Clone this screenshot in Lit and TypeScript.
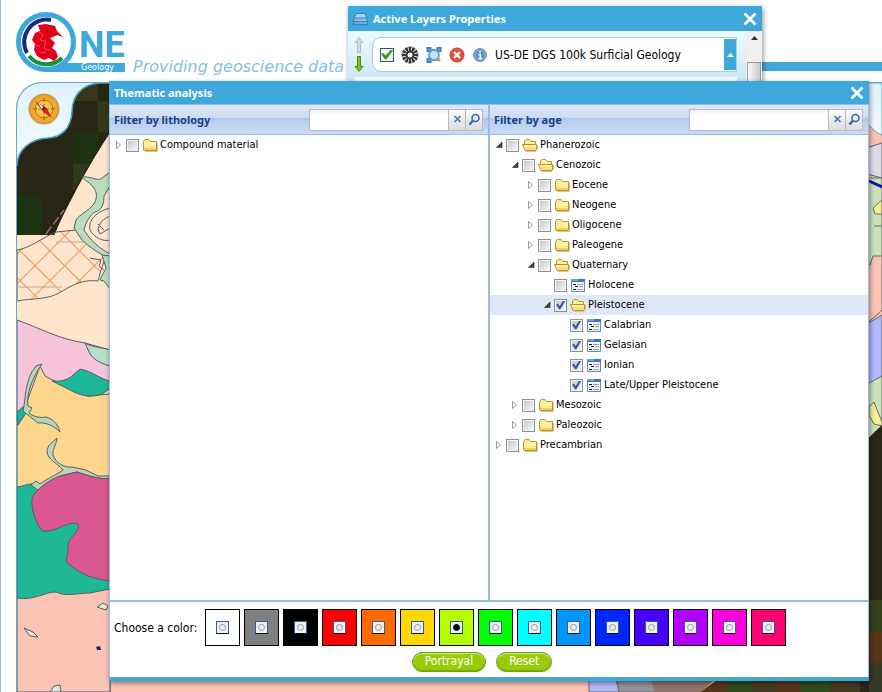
import { LitElement, html, svg, css, nothing } from "lit";
import { customElement, property, state } from "lit/decorators.js";
import { classMap } from "lit/directives/class-map.js";
import { styleMap } from "lit/directives/style-map.js";

interface TreeNode {
  label: string;
  open?: boolean;
  checked?: boolean;
  selected?: boolean;
  leaf?: boolean;
  children?: TreeNode[];
}

const LITHOLOGY: TreeNode[] = [{ label: "Compound material" }];

const AGES: TreeNode[] = [
  {
    label: "Phanerozoic",
    open: true,
    children: [
      {
        label: "Cenozoic",
        open: true,
        children: [
          { label: "Eocene" },
          { label: "Neogene" },
          { label: "Oligocene" },
          { label: "Paleogene" },
          {
            label: "Quaternary",
            open: true,
            children: [
              { label: "Holocene", leaf: true },
              {
                label: "Pleistocene",
                open: true,
                checked: true,
                selected: true,
                children: [
                  { label: "Calabrian", leaf: true, checked: true },
                  { label: "Gelasian", leaf: true, checked: true },
                  { label: "Ionian", leaf: true, checked: true },
                  { label: "Late/Upper Pleistocene", leaf: true, checked: true },
                ],
              },
            ],
          },
        ],
      },
      { label: "Mesozoic" },
      { label: "Paleozoic" },
    ],
  },
  { label: "Precambrian" },
];

const COLORS: [string, string][] = [
  ["White", "#ffffff"], ["Grey", "#808080"], ["Black", "#000000"], ["Red", "#ff0000"],
  ["Orange", "#ff6a00"], ["Gold", "#ffd800"], ["Lime", "#b6ff00"], ["Green", "#00ff00"],
  ["Cyan", "#00ffff"], ["Azure", "#0094ff"], ["Blue", "#0026ff"], ["Indigo", "#4800ff"],
  ["Violet", "#b200ff"], ["Magenta", "#ff00dc"], ["Pink", "#ff006e"],
];

const closeIcon = html`<svg width="14" height="14" viewBox="0 0 14 14" aria-hidden="true">
  <path d="M1.500 1.500 12.500 12.500M12.500 1.500 1.500 12.500" stroke="#fff" stroke-width="2.800" fill="none"/></svg>`;

const folderClosed = html`<svg width="16" height="16" viewBox="0 0 16 16" aria-hidden="true">
  <path d="M1.500 13V4.500L3 2.500H7L8.500 4.500H14.500V13.500H2Z" fill="#ffe98a" stroke="#b8922f"/>
  <path d="M2 5.500H14V9H2Z" fill="#fff3ae"/><path d="M2 11H14V13H2Z" fill="#f8d24c"/>
  <path d="M15.500 6V14.500H3" stroke="#cfc6a8" fill="none"/></svg>`;

const folderOpen = html`<svg width="16" height="16" viewBox="0 0 16 16" aria-hidden="true">
  <path d="M2.500 8V4L4 2.500H7.500L9 4.500H13.500V8" fill="#fff0a0" stroke="#b8922f"/>
  <path d="M.5 7.500H14.500V12L13.500 13.500H3Z" fill="#ffe070" stroke="#b8922f"/>
  <path d="M2 8.500H13.500V10H2.500Z" fill="#fff5b8"/><path d="M15.500 8V12.500L14 14.500H4" stroke="#cfc6a8" fill="none"/></svg>`;

const leafIcon = html`<svg width="16" height="16" viewBox="0 0 16 16" aria-hidden="true">
  <path d="M1.500 2.500H14.500V14.500H1.500Z" fill="#f6faff" stroke="#5c8fd0"/>
  <path d="M1 2H15V5H1Z" fill="#3f72c4"/><path d="M1 2H8V4H1Z" fill="#6f9fe0"/>
  <path d="M3 7.500H6M5 9.500H8M3 12.500H6" stroke="#111"/>
  <path d="M7 7.500H13M9 9.500H13M7 12.500H13" stroke="#9aa2ac"/></svg>`;

@customElement("tree-list")
class TreeList extends LitElement {
  @property({ attribute: false }) nodes: TreeNode[] = [];

  static styles = css`
    :host { display: block; font: 11px/16px "DejaVu Sans Condensed", "Noto Sans", sans-serif; }
    ul { list-style: none; margin: 0; padding: 0; }
    .row { display: flex; align-items: center; height: 20px; }
    .row.selected { background: #dfe8f6; }
    .indent { flex: none; }
    .toggle { width: 16px; height: 16px; flex: none; padding: 0; border: 0; background: none; display: block; }
    .toggle svg, .icon svg { display: block; }
    .icon { margin: 0 2px 0 3px; }
    label { display: flex; align-items: center; white-space: nowrap; }
    input {
      appearance: none; box-sizing: border-box; width: 13px; height: 13px; margin: 0;
      border: 1px solid #8e8f8f; display: grid; place-items: center;
      background: linear-gradient(135deg, #c4c8ce, #f6f6f6) content-box, #f4f4f4; padding: 1px;
    }
    input:checked::before {
      content: ""; width: 9px; height: 9px; background: #3b5a9d;
      clip-path: polygon(0 45%, 22% 36%, 42% 62%, 78% 0, 100% 6%, 48% 100%, 36% 100%);
    }
  `;

  private row(node: TreeNode, depth: number): unknown {
    return html`<li>
      <div class=${classMap({ row: true, selected: !!node.selected })}>
        <span class="indent" style=${styleMap({ width: `${depth * 16}px` })}></span>
        ${node.leaf
          ? html`<span class="toggle"></span>`
          : html`<button class="toggle" aria-label=${node.label} aria-expanded=${node.open ? "true" : "false"}
              @click=${() => { node.open = !node.open; this.requestUpdate(); }}>
              <svg width="16" height="16" viewBox="0 0 16 16">${node.open
                ? svg`<path d="M12 5V10.500H6.500Z" fill="#444" stroke="#222" stroke-width=".6"/>`
                : svg`<path d="M6.500 4.500V11.500L10.500 8Z" fill="#fff" stroke="#999"/>`}</svg>
            </button>`}
        <label>
          <input type="checkbox" .checked=${!!node.checked} />
          <span class="icon">${node.leaf ? leafIcon : node.open ? folderOpen : folderClosed}</span>
          ${node.label}
        </label>
      </div>
      ${node.open && node.children ? html`<ul>${node.children.map((c) => this.row(c, depth + 1))}</ul>` : nothing}
    </li>`;
  }

  render() {
    return html`<ul>${this.nodes.map((n) => this.row(n, 0))}</ul>`;
  }
}

@customElement("filter-panel")
class FilterPanel extends LitElement {
  @property() heading = "";
  @property({ attribute: false }) nodes: TreeNode[] = [];

  static styles = css`
    :host { display: flex; flex-direction: column; min-width: 0; }
    header {
      display: flex; align-items: center; box-sizing: border-box; height: 31px; padding: 0 5px 0 4px;
      border-top: 1px solid #99bbe8; border-bottom: 1px solid #99bbe8;
      background: linear-gradient(#dfe8f8 0, #ccdaf0 46%, #adc5e8 46%, #b8cdec 52%, #c9dbf5 100%);
    }
    h2 { flex: 1; margin: 0; font-size: 11px; line-height: 16px; color: #15428b; white-space: nowrap; }
    input {
      box-sizing: border-box; width: 140px; height: 22px; border: 1px solid #b5b8c8; padding: 1px 3px;
      background: linear-gradient(#eee, #fff 5px); font: inherit;
    }
    button {
      box-sizing: border-box; width: 17px; height: 22px; padding: 0; border: 1px solid #b5b8c8; border-left: 0;
      background: linear-gradient(#fafafa, #ddd); display: grid; place-items: center;
    }
    tree-list { flex: 1; }
  `;

  render() {
    return html`
      <header>
        <h2>${this.heading}</h2>
        <input type="text" aria-label=${this.heading} />
        <button aria-label="Clear"><svg width="9" height="9" viewBox="0 0 9 9">
          <path d="M1.500 1 7.500 7M7.500 1 1.500 7" stroke="#4478b4" stroke-width="1.700"/></svg></button>
        <button aria-label="Search"><svg width="13" height="14" viewBox="0 0 13 14">
          <circle cx="7.500" cy="5" r="3.500" fill="#e8f2ff" stroke="#3668b0" stroke-width="1.600"/>
          <path d="M5 7.500 1.500 11.500" stroke="#3668b0" stroke-width="2.400"/></svg></button>
      </header>
      <tree-list .nodes=${this.nodes}></tree-list>`;
  }
}

@customElement("geo-map")
class GeoMap extends LitElement {
  static styles = css`
    :host { display: block; overflow: hidden; }
    svg { display: block; width: 100%; height: 100%; }
  `;

  render() {
    return html`<svg viewBox="17 83 865 609" preserveAspectRatio="xMinYMin slice" role="img" aria-label="Geological map">
      <defs>
        <pattern id="hatch" width="21" height="21" patternUnits="userSpaceOnUse" patternTransform="translate(35 265) rotate(45)">
          <path d="M0 .5H21M.5 0V21" stroke="#f0905a" stroke-width="1" fill="none"/>
        </pattern>
        <linearGradient id="panel" x1="0" y1="0" x2="0" y2="1">
          <stop offset="0" stop-color="#dff2fb"/><stop offset="1" stop-color="#f6fcff"/>
        </linearGradient>
        <radialGradient id="gold"><stop offset="0" stop-color="#ffd86a"/><stop offset="1" stop-color="#f0a020"/></radialGradient>
      </defs>
      <rect x="17" y="83" width="865" height="609" fill="#fac3b3"/>
      <rect x="17" y="83" width="110" height="160" fill="#2a2614"/>
      <path d="M73 132H98V164H73ZM17 195H42V235H17Z" fill="#1d3210"/>
      <path d="M73 164H98V190H73ZM73 83H98V101H73ZM98 101H110V132H98Z" fill="#33381a"/>
      <g stroke="#555f66" stroke-width="1">
        <path d="M110 132C92 160 70 200 54 235H17V330L110 352Z" fill="#ffe5cc" stroke="none"/>
        <path d="M110 132C92 160 66 200 54 235" fill="none" stroke="#222"/>
        <path d="M46 234 64 210" stroke="#8e7470" stroke-width="1.500" stroke-dasharray="9 3"/>
        <path d="M17 250C30 248 42 238 56 232L77 230 88 244 106 256 101 270 98 281C74 278 62 295 48 297C40 299 28 299 17 301Z" fill="url(#hatch)"/>
        <path d="M17 287H62M56 242H84" stroke="#b8a898"/>
        <path d="M82 177C92 176 98 182 102 178L110 172V186L104 196C104 204 102 210 95 212C90 215 86 222 84 230C90 240 99 248 110 254V259C100 254 90 248 82 240L74 228 76 220C80 214 88 211 91 207C97 202 98 194 94 188C90 182 85 181 82 177Z" fill="#b9dcbd"/>
        <path d="M110 208C96 212 88 220 90 230C94 238 104 242 110 240M110 216C100 220 96 228 100 234L110 228M98 224 104 230" fill="none"/>
        <path d="M102 255 106 268 100 280 104 281 110 289V256Z" fill="#b9dcbd"/>
        <path d="M90 258 101 260 99 266 104 270" fill="none"/>
        <path d="M17 320C40 328 58 339 85 343L110 350V412H17Z" fill="#f7c4da"/>
        <path d="M85 343C93 348 102 347 110 350V366C102 364 94 360 90 354Z" fill="#b5dec5"/>
        <path d="M40 366 45 376C54 382 66 384 74 390L88 396 110 394V490H17V488L17 426 24 410Z" fill="#ffd68e"/>
        <path d="M52 381C60 382 68 380 73 375L80 369C92 371 100 379 110 381V388C100 398 86 398 74 392Z" fill="#1eb899"/>
        <path d="M17 412 24 406 26 413 18 425Z" fill="#1eb899"/>
        <path d="M42 364 36 366C24 380 26 400 23 411L38 423C46 422 54 426 60 432C57 422 52 419 46 417C40 418 34 417 29 413L32 408 28 406C26 395 32 378 42 364Z" fill="#b9d5b8"/>
        <path d="M17 487C26 486 30 482 38 485V490C54 482 60 476 78 472C90 476 100 479 110 478V692H17Z" fill="#1eb899"/>
        <path d="M31 485 36 481 40 484C48 478 58 474 63 470C56 462 48 460 47 452C47 445 53 442 57 438C56 446 52 450 53 455C56 463 64 468 72 467L86 470 98 476 110 476V479C98 479 89 476 77 472L60 476C52 480 46 486 38 490Z" fill="#b9d5b8"/>
        <path d="M38 490C46 482 54 478 60 476L77 472C90 476 100 480 110 478V581C96 579 85 576 77 570C72 566 67 565 66 560C70 550 66 544 71 538C76 533 80 527 78 524C68 520 56 533 42 531C35 522 31 508 32 498C33 494 36 492 38 490Z" fill="#da5792"/>
        <path d="M17 598C34 601 44 592 56 592C66 597 78 593 90 593L110 589V692H17Z" fill="#fac3b3"/>
        <path d="M24 628 33 632 38 637 30 636ZM97 607 103 603 108 606 106 610ZM50 692 54 686 60 685 61 692Z" fill="#dfebd8"/>
      </g>
      <path d="M96 647 100 646 101 650 97 650Z" fill="#202080"/>
      <g stroke="#6d6d70">
        <path d="M589 660H612L619 692H589Z" fill="#b3b8fb"/>
        <path d="M612 660H648L655 692H619Z" fill="#92939b"/>
        <path d="M648 660H740L700 692H655Z" fill="#8f7469" stroke="none"/>
      </g>
      <path d="M720 678H882V692H700Z" fill="#533519"/>
      <path d="M727 678H752V692H727ZM800 678H830V692H800Z" fill="#2f4a1b"/>
      <path d="M752 678H775V692H752ZM830 678H882V692H830Z" fill="#413a20"/>
      <g stroke="#66666a">
        <path d="M860 150 882 143V178L860 172Z" fill="#dfdcea"/>
        <path d="M860 178H882V270L860 290Z" fill="#cae3b8"/>
        <path d="M860 262 870 265 873 256 882 256V310L860 330Z" fill="#fac3b3"/>
        <path d="M860 328 882 315V376C876 384 872 386 860 387Z" fill="#b3b8fb"/>
        <path d="M860 388 882 376V440L860 450Z" fill="#cae3b8"/>
        <path d="M869 407 874 402 882 422V426L874 424 869 415ZM873 208 882 200V214H875ZM874 226H882" fill="#f8ee94"/>
        <path d="M869 181 882 187" stroke="#1710b8" stroke-width="3"/>
      </g>
      <path d="M860 446 882 425V692H860Z" fill="#2a2614"/>
      <path d="M869 600H882V632H869Z" fill="#35401b"/><path d="M869 632H882V663H869Z" fill="#553516"/>
      <path d="M869 663H882V692H869Z" fill="#343a25"/>
      <path d="M860 83H882V135C874 132 866 124 860 110Z" fill="url(#panel)" stroke="#5aa9d0"/>
      <path d="M17 83H100C82 84 72 96 72 112C71 128 62 137 48 138C30 139 17 150 17 166Z" fill="url(#panel)"/>
      <path d="M110 83H100C82 84 72 96 72 112C71 128 62 137 48 138C30 139 17 150 17 166" fill="none" stroke="#489fc7" stroke-width="1.500"/>
      <circle cx="44" cy="109" r="15.500" fill="#c99b50"/><circle cx="44" cy="109" r="13.500" fill="url(#gold)"/>
      <circle cx="44" cy="109" r="9" fill="none" stroke="#b87510"/>
      <path d="M44 98V120M33 109H55" stroke="#925a10" stroke-width="1" stroke-dasharray="4 2"/>
      <path d="M35 101 46 108 43 111Z" fill="#333"/><path d="M46 107 52 118 42 111Z" fill="#d21b2b"/>
      <path d="M37 102 43 107 42 109Z" fill="#fff"/>
    </svg>`;
  }
}

@customElement("app-root")
class AppRoot extends LitElement {
  @state() private color = "Lime";

  static styles = css`
    :host {
      display: block; position: relative; min-height: 100vh; box-sizing: border-box; overflow: hidden;
      background: #fff; border-left: 1px solid #9dbccf; font: 11px/16px "Noto Sans", sans-serif; color: #000;
    }
    .page { display: flex; flex-direction: column; min-height: 100vh; padding-left: 15px; box-sizing: border-box; }
    .top { display: flex; height: 82px; align-items: flex-start; }
    .logo { margin-top: 11px; flex: none; }
    .logo text { font-family: Roboto, sans-serif; font-weight: bold; font-size: 36px; fill: #3ea7db; }
    .logo .small { font-family: "DejaVu Sans", sans-serif; font-size: 8px; font-weight: normal; fill: #fff; }
    .tagline { margin: 57px 0 0 7px; font: italic 16px/20px "DejaVu Sans", sans-serif; color: #82bfe0; white-space: nowrap; }
    .rule { flex: 1; margin: 62px 0 0 60px; height: 9px; background: #3ea7db; }
    geo-map { flex: 1; height: 610px; border: 1px solid #5aa9d0; border-width: 1px 0 0 1px; border-radius: 26px 0 0 0; }

    .window { position: absolute; box-shadow: 1px 2px 5px rgba(0, 0, 0, 0.45); }
    .layers { left: 347px; top: 6px; width: 414px; max-width: 100%; background: #e4f4fb; }
    .analysis { left: 108px; right: 13px; top: 81px; background: #fff; border-bottom: 4px solid #3ea7db; }
    .titlebar { display: flex; align-items: center; gap: 4px; background: #3ea7db; color: #fff; padding: 0 5px; height: 23px; }
    .layers .titlebar { height: 25px; padding-left: 4px; }
    .titlebar h1 { flex: 1; margin: 0; font-size: 11px; line-height: 16px; }
    .titlebar button { padding: 0; border: 0; background: none; height: 14px; }
    svg { display: block; }

    .stack { display: flex; height: 110px; }
    .cards { flex: 1; padding: 6px 9px 0 6px; background: linear-gradient(#eefaff, #cbe7f3 50px); }
    .card-row { display: flex; align-items: center; gap: 8px; }
    .order { display: flex; flex-direction: column; gap: 3px; }
    .order button, .tools button { padding: 0; border: 0; background: none; display: block; }
    .card {
      flex: 1; display: flex; align-items: center; box-sizing: border-box; height: 35px; padding: 0 0 0 7px;
      background: #fff; border: 1px solid #9fd0e4; border-radius: 9px 0 0 9px; font: 12px/16px "DejaVu Sans Condensed", "Noto Sans", sans-serif;
    }
    .tools { display: flex; align-items: center; gap: 7px; flex: 1; white-space: nowrap; }
    .tools input {
      appearance: none; box-sizing: border-box; width: 14px; height: 14px; margin: 0; border: 1px solid #23578a;
      display: grid; place-items: center; background: #f4f6f4;
    }
    .tools input:checked::before {
      content: ""; width: 12px; height: 10px; background: #3f9a12;
      clip-path: polygon(0 45%, 20% 36%, 38% 60%, 85% 0, 100% 10%, 44% 100%, 34% 100%);
    }
    .fold { width: 12px; height: 31px; padding: 0; border: 0; background: #3ea7db; display: grid; place-items: center; }
    .next { height: 40px; margin-top: 5px; background: #f0fafd; }
    .scroll { width: 16px; background: #f0f0f0; display: flex; flex-direction: column; align-items: center; padding-top: 5px; box-sizing: border-box; gap: 22px; }
    .thumb { width: 14px; height: 50px; box-sizing: border-box; border: 1px solid #999; background: linear-gradient(90deg, #fafafa, #c8c8c8); }

    .body { border: 1px solid #99bbe8; border-width: 0 1px; }
    .panels { display: grid; grid-template-columns: calc(50% - 1px) 1fr; min-height: 496px; border-bottom: 2px solid #99bbe8; }
    filter-panel + filter-panel { border-left: 2px solid #99bbe8; }
    .footer { padding: 7px 4px 5px; }
    fieldset {
      display: flex; align-items: center; gap: 4px; margin: 0; padding: 0; border: 0; min-width: 0;
      font: 12px/16px "DejaVu Sans Condensed", "Noto Sans", sans-serif;
    }
    .caption { width: 87px; white-space: nowrap; }
    .swatch { width: 35px; height: 37px; box-sizing: border-box; border: 1px solid #000; display: grid; place-items: center; }
    .swatch input {
      appearance: none; width: 13px; height: 13px; box-sizing: border-box; margin: 0; border: 1px solid #2d619b;
      border-bottom-color: #111; background: #eef0f4; display: grid; place-items: center;
    }
    .swatch input::before { content: ""; width: 7px; height: 7px; box-sizing: border-box; border: 1px solid #999; border-radius: 50%; }
    .swatch input:checked::before { background: #000; border-color: #000; }
    .actions { display: flex; justify-content: center; gap: 10px; padding: 6px 14px 0 0; }
    .pill {
      height: 20px; box-sizing: border-box; padding: 0 12px 3px; border: 1px solid #6c9c2a; border-radius: 10px;
      background: #98cb05; color: #fff; font: 12px/14px "DejaVu Sans Condensed", "Noto Sans", sans-serif;
      box-shadow: inset 0 1px 1px #d4f08a, inset 0 -1px 1px #79aa08;
    }
  `;

  private logo() {
    return html`<svg class="logo" width="110" height="62" viewBox="16 11 110 62" role="img" aria-label="OneGeology">
      <path d="M62 63H125V72H46Z" fill="#3ea7db"/>
      <circle cx="46" cy="42" r="27.500" fill="#fff" stroke="#3ea7db" stroke-width="5"/>
      <path d="M51 20A22.500 22.500 0 0 0 27 53" fill="none" stroke="#182c7c" stroke-width="4"/>
      <path d="M29 56A22.500 22.500 0 0 0 62 58" fill="none" stroke="#16923a" stroke-width="4"/>
      <path d="M38 25 46 24 55 26 57 31 63 37 57 35 53 37 50 38 55 43 52 48 56 51 58 57 54 61 49 58 44 60 37 56 34 50 35 44 32 40 35 33 40 31Z" fill="#e2001a"/>
      <path d="M38 31 43 35 40 40 46 41 44 48 50 51M40 53 46 52M34 45 40 46" fill="none" stroke="#f47c86" stroke-width=".6"/>
      <text x="79" y="57">NE</text>
      <text class="small" x="81" y="70">Geology</text>
    </svg>`;
  }

  private arrow(up: boolean) {
    const [fill, stroke] = up ? ["#d5dadd", "#b4bcc0"] : ["#7fc410", "#4c8a08"];
    return html`<svg width="10" height="16" viewBox="0 0 10 16">
      <path d=${up ? "M5 .5 9 5.500H6.500V15.500H3.500V5.500H1Z" : "M5 15.500 9 10.500H6.500V.5H3.500V10.500H1Z"} fill=${fill} stroke=${stroke}/></svg>`;
  }

  private layersWindow() {
    const rays = Array.from({ length: 12 }, (_, i) =>
      svg`<path d="M8.300 5 7.300 .8A8 8 0 0 1 10.700 .8L9.700 5Z" fill="#333" transform="rotate(${i * 30} 9 9)"/>`);
    return html`<section class="window layers">
      <div class="titlebar">
        <svg width="17" height="16" viewBox="0 0 17 16"><g stroke="#2a74b0" stroke-width=".8">
          <path d="M3 9H14L16 13.500H1Z" fill="#6fb0e0"/><path d="M3 6H14L16 10.500H1Z" fill="#86c0ea"/>
          <path d="M4.500 2.500H12.500L15 7H2Z" fill="#a8d6f6"/></g></svg>
        <h1>Active Layers Properties</h1>
        <button aria-label="Close">${closeIcon}</button>
      </div>
      <div class="stack">
        <div class="cards">
          <div class="card-row">
            <div class="order">
              <button aria-label="Move up">${this.arrow(true)}</button>
              <button aria-label="Move down">${this.arrow(false)}</button>
            </div>
            <div class="card">
              <div class="tools">
                <input type="checkbox" checked aria-label="Show layer" />
                <button aria-label="Opacity"><svg width="18" height="18" viewBox="0 0 18 18">
                  ${rays}<circle cx="9" cy="9" r="4.500" fill="#333"/><circle cx="9" cy="9" r="2.500" fill="#fff"/></svg></button>
                <button aria-label="Zoom to layer"><svg width="16" height="16" viewBox="0 0 15 16">
                  <path d="M0 0H5V5H0ZM10 0H15V5H10ZM0 11H5V16H0Z" fill="#3a7cc2"/>
                  <path d="M2 2H3V3H2ZM12 2H13V3H12ZM2 13H3V14H2Z" fill="#cfe6f8"/>
                  <path d="M2.500 3V13M12.500 3V13M3 2.500H12M3 13.500H12" stroke="#5b9fd2"/>
                  <circle cx="7.500" cy="8" r="4.800" fill="#bfe2f8" stroke="#5b9fd2" stroke-width="1.400"/>
                  <path d="M11 11.500 13.500 14" stroke="#c9a050" stroke-width="3"/></svg></button>
                <button aria-label="Remove layer"><svg width="16" height="16" viewBox="0 0 16 16">
                  <circle cx="8" cy="8" r="7" fill="#e25440" stroke="#c23a2c"/>
                  <path d="M5 5 11 11M11 5 5 11" stroke="#fff" stroke-width="2.200"/></svg></button>
                <button aria-label="Layer information"><svg width="16" height="16" viewBox="-1 -1 16 16">
                  <circle cx="7" cy="7" r="6.300" fill="#5d90cc" stroke="#3f6fa8"/>
                  <circle cx="7" cy="7" r="5.200" fill="none" stroke="#b3cfee" stroke-width=".8"/>
                  <path d="M7 3V4.800M5.500 6.500H7.300V10.500M5.500 10.500H9" stroke="#fff" stroke-width="1.500" fill="none"/></svg></button>
                <span>US-DE DGS 100k Surficial Geology</span>
              </div>
              <button class="fold" aria-label="Collapse"><svg width="7" height="4" viewBox="0 0 7 4"><path d="M3.500 0 7 4H0Z" fill="#fff"/></svg></button>
            </div>
          </div>
          <div class="next"></div>
        </div>
        <div class="scroll">
          <svg width="7" height="4" viewBox="0 0 7 4"><path d="M3.500 0 7 4H0Z" fill="#333"/></svg>
          <div class="thumb"></div>
        </div>
      </div>
    </section>`;
  }

  private analysisWindow() {
    return html`<section class="window analysis">
      <div class="titlebar"><h1>Thematic analysis</h1><button aria-label="Close">${closeIcon}</button></div>
      <div class="body">
        <div class="panels">
          <filter-panel heading="Filter by lithology" .nodes=${LITHOLOGY}></filter-panel>
          <filter-panel heading="Filter by age" .nodes=${AGES}></filter-panel>
        </div>
        <div class="footer">
          <fieldset aria-labelledby="caption">
            <span class="caption" id="caption">Choose a color:</span>
            ${COLORS.map(([name, value]) => html`<label class="swatch" style=${styleMap({ background: value })}>
              <input type="radio" name="color" aria-label=${name} .checked=${this.color === name}
                @change=${() => (this.color = name)} /></label>`)}
          </fieldset>
          <div class="actions">
            <button class="pill">Portrayal</button>
            <button class="pill">Reset</button>
          </div>
        </div>
      </div>
    </section>`;
  }

  render() {
    return html`
      <div class="page">
        <div class="top">
          ${this.logo()}
          <p class="tagline">Providing geoscience data</p>
          <div class="rule"></div>
        </div>
        <geo-map></geo-map>
      </div>
      ${this.layersWindow()} ${this.analysisWindow()}
    `;
  }
}
